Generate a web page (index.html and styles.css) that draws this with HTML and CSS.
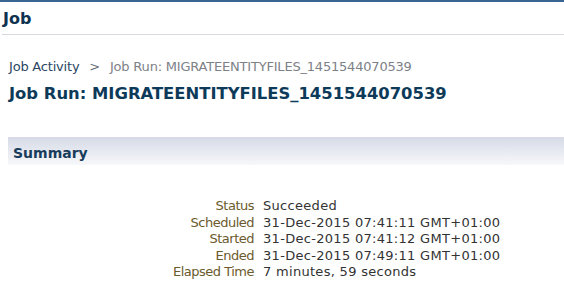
FILE: index.html
```html
<!DOCTYPE html>
<html lang="en">
  <head>
    <meta charset="UTF-8" />
    <title>Job</title>
    <link rel="stylesheet" href="styles.css">
  </head>
  <body>
    <div class="page-head">
      <h1 class="page-title">Job</h1>
    </div>
    <div class="crumbs">
      <a class="crumb-link" href="#">Job Activity</a>
      <span class="crumb-sep">&gt;</span>
      <span class="crumb-current">Job Run: MIGRATEENTITYFILES_1451544070539</span>
    </div>
    <h2 class="run-title">Job Run: MIGRATEENTITYFILES_1451544070539</h2>
    <div class="section-bar">
      <h3 class="section-title">Summary</h3>
    </div>
    <div class="summary">
      <div class="label">Status</div><div class="value">Succeeded</div>
      <div class="label">Scheduled</div><div class="value">31-Dec-2015 07:41:11 GMT+01:00</div>
      <div class="label">Started</div><div class="value">31-Dec-2015 07:41:12 GMT+01:00</div>
      <div class="label">Ended</div><div class="value">31-Dec-2015 07:49:11 GMT+01:00</div>
      <div class="label">Elapsed Time</div><div class="value">7 minutes, 59 seconds</div>
    </div>
  </body>
</html>
```

FILE: styles.css
```css
* {
  box-sizing: border-box;
}

body {
  margin: 0;
  font-family: "DejaVu Sans", sans-serif;
  font-size: 13px;
  color: #333;
  background: #fff;
  border-top: 2px solid #3a6593;
}

.page-head {
  margin-left: 2px;
  padding: 7px 0 6px 1px;
  border-bottom: 1px solid #d6d9df;
}

.page-title {
  margin: 0;
  font-size: 16px;
  line-height: 19px;
  color: #0e3250;
}

.crumbs {
  margin: 24px 0 0 9px;
  line-height: 16px;
  letter-spacing: -0.2px;
}

.crumb-link {
  color: #2b4663;
  text-decoration: none;
}

.crumb-sep {
  color: #6b7079;
  margin: 0 6px;
}

.crumb-current {
  color: #7d8187;
}

.run-title {
  margin: 9px 0 0 9px;
  font-size: 16.4px;
  line-height: 20px;
  color: #0e3a5a;
}

.section-bar {
  margin: 33px 0 0 8px;
  height: 28px;
  padding: 7px 0 0 5px;
  background: linear-gradient(#d5dae6, #f7f8fa);
}

.section-title {
  margin: 0;
  font-size: 14px;
  line-height: 18px;
  color: #183c5b;
}

.summary {
  display: grid;
  grid-template-columns: 254px auto;
  column-gap: 9px;
  margin-top: 33px;
  line-height: 16.6px;
}

.label {
  text-align: right;
  color: #6b5a2c;
  letter-spacing: -0.5px;
}

.value {
  color: #333;
  letter-spacing: 0.3px;
}
```
